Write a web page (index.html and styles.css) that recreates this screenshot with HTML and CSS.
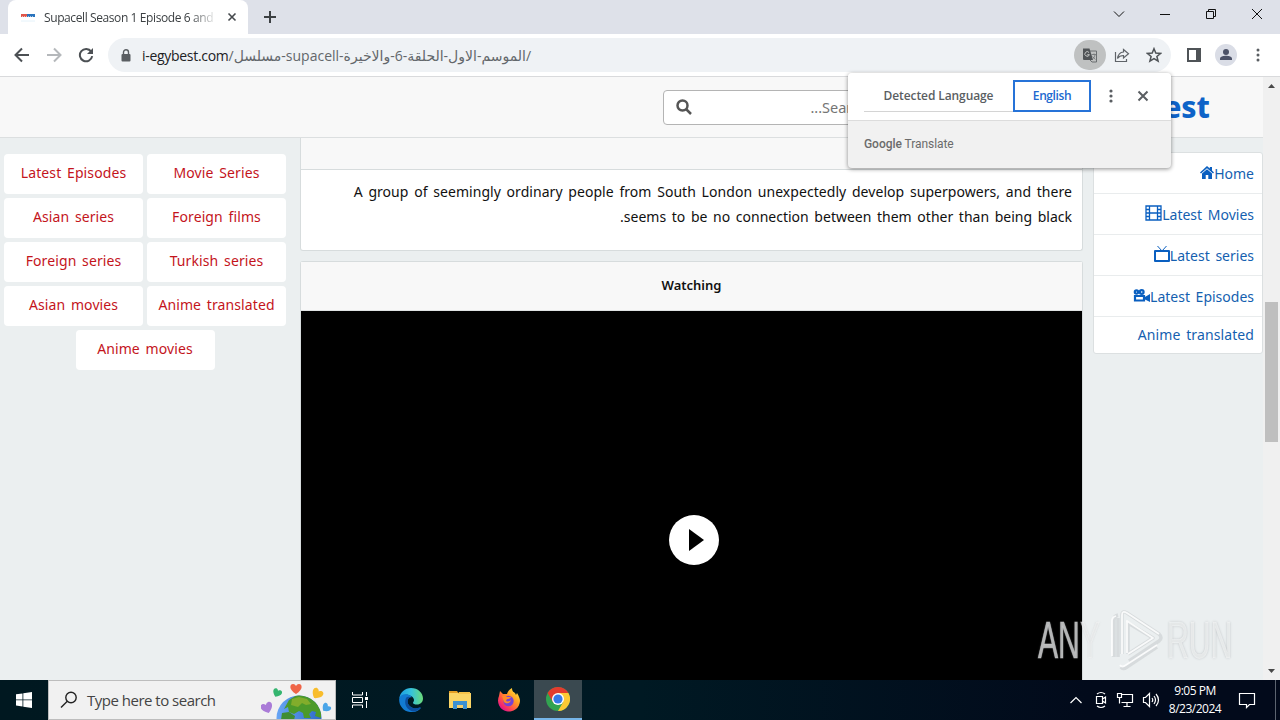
FILE: index.html
```
<!DOCTYPE html>
<html>
  <head>
    <meta charset="utf-8" />
    <title>Supacell Season 1 Episode 6 and</title>
    <link rel="stylesheet" href="styles.css" />
  </head>
  <body>
    <div class="tabs">
      <div class="tab">
        <svg class="favicon" width="16" height="16" viewBox="0 0 16 16">
          <rect width="16" height="16" fill="#fff" />
          <path d="M1 5h6v3H1z" fill="#e0564a" />
          <path d="M7 5h8v3H7z" fill="#2a74bd" />
          <path d="M2 7.500h12" stroke="#fff" stroke-width=".6" stroke-dasharray="1 1" />
          <path d="M1 12h14" stroke="#e4f2fa" />
        </svg>
        <span class="tab-title">Supacell Season 1 Episode 6 and</span>
        <svg width="10" height="10" viewBox="0 0 10 10"><path d="M1.500 1.500l7 7M8.500 1.500l-7 7" stroke="#45494d" stroke-width="1.600" /></svg>
      </div>
      <svg class="new-tab" width="14" height="14" viewBox="0 0 14 14"><path d="M7 1v12M1 7h12" stroke="#3c4043" stroke-width="2" /></svg>
      <div class="window-buttons">
        <svg width="12" height="12" viewBox="0 0 12 12"><path d="M1 3.500l5 5 5-5" /></svg>
        <svg width="12" height="12" viewBox="0 0 12 12"><path d="M1 6.500h10" /></svg>
        <svg width="12" height="12" viewBox="0 0 12 12"><path d="M1.500 3.500h7v7h-7zM3.500 3.500v-2h7v7h-2" /></svg>
        <svg width="12" height="12" viewBox="0 0 12 12"><path d="M1 1l10 10M11 1L1 11" /></svg>
      </div>
    </div>

    <div class="toolbar">
      <svg class="nav" width="16" height="16" viewBox="0 0 16 16"><path d="M15 8H2M8 1.500L1.500 8 8 14.500" stroke="#4c5054" /></svg>
      <svg class="nav" width="16" height="16" viewBox="0 0 16 16"><path d="M1 8h13M8 1.500L14.500 8 8 14.500" stroke="#b5b8bb" /></svg>
      <svg class="nav" width="16" height="16" viewBox="0 0 16 16"><path d="M13.200 4.600A6.200 6.200 0 1 0 14.200 9.200" stroke="#4c5054" /><path d="M15 1v6H9z" fill="#4c5054" stroke="none" /></svg>
      <div class="address">
        <svg width="10" height="13" viewBox="0 0 10 13"><rect y="5" x=".5" width="9" height="7.500" rx="1" fill="#5a5e62" /><path d="M2.500 5V3.300a2.500 2.500 0 0 1 5 0V5" fill="none" stroke="#5a5e62" stroke-width="1.400" /></svg>
        <div class="url"><span class="domain">i-egybest.com</span>/مسلسل-supacell-الموسم-الاول-الحلقة-6-والاخيرة/</div>
        <div class="translate-icon">
          <svg width="16" height="16" viewBox="0 0 16 16">
            <path d="M8 4h6.500v11H10l-2-2" fill="none" stroke="#6b6f71" />
            <path d="M1 1.500h6.500L11 13H2a1 1 0 0 1-1-1z" fill="#505457" />
            <path d="M7 5.500a2.300 2.300 0 1 0 .4 2.200H5.300" fill="none" stroke="#c5c7c6" />
            <path d="M9.500 7.500H14M12 6.500v1M10.600 9.500l2.700 3M13 8c-.4 2-1.500 3.300-2.300 3.800" fill="none" stroke="#6b6f71" stroke-width=".8" />
          </svg>
        </div>
        <svg class="share" width="16" height="16" viewBox="0 0 16 16"><path d="M1.500 5v9.500h11V12M9.500 2.500l5 4.300-5 4.200V8.500c-3 0-4.700 1-6 3 .5-3.600 2.500-6.200 6-6.500z" fill="none" stroke="#5f6368" stroke-width="1.200" /></svg>
        <svg width="16" height="16" viewBox="0 0 16 16"><path d="M8 1.700l1.800 4.400 4.800.3-3.700 3.100 1.200 4.700L8 11.600l-4.100 2.600 1.200-4.700L1.400 6.400l4.800-.3z" fill="none" stroke="#4f5357" stroke-width="1.500" /></svg>
      </div>
      <svg class="panel" width="14" height="14" viewBox="0 0 14 14"><path d="M1 1h12v12H1z" fill="#fff" stroke="#4f5357" stroke-width="2" /><path d="M9 1h4v12H9z" fill="#4f5357" /></svg>
      <svg class="profile" width="22" height="22" viewBox="0 0 22 22"><circle cx="11" cy="11" r="11" fill="#dadde6" /><circle cx="11" cy="8" r="3" fill="#4b5167" /><path d="M5 16v-1.300c0-2.200 3.500-3 6-3s6 .8 6 3V16z" fill="#4b5167" /></svg>
      <svg class="menu" width="4" height="14" viewBox="0 0 4 14" fill="#5a5e62"><circle cx="2" cy="2" r="1.500" /><circle cx="2" cy="7" r="1.500" /><circle cx="2" cy="12" r="1.500" /></svg>
    </div>

    <div class="viewport">
      <div class="page">
        <div class="header">
          <div class="search">
            <svg width="16" height="16" viewBox="0 0 16 16"><circle cx="6.500" cy="6.500" r="5" /><path d="M10 10l5 5" /></svg>
            <span>...Search</span>
          </div>
          <div class="logo"><span>Egy</span>Best</div>
        </div>
        <div class="columns">
          <div class="tags">
            <a>Latest Episodes</a>
            <a>Movie Series</a>
            <a>Asian series</a>
            <a>Foreign films</a>
            <a>Foreign series</a>
            <a>Turkish series</a>
            <a>Asian movies</a>
            <a>Anime translated</a>
            <a>Anime movies</a>
          </div>

          <div class="main">
            <div class="card story">
              <div class="story-head"></div>
              <p class="line1">A group of seemingly ordinary people from South London unexpectedly develop superpowers, and there</p>
              <p>.seems to be no connection between them other than being black</p>
            </div>
            <div class="card watch">
              <h3>Watching</h3>
              <div class="player">
                <svg width="50" height="50" viewBox="0 0 50 50"><circle cx="25" cy="25" r="25" fill="#fff" /><path d="M20 14l15 11-15 11z" /></svg>
              </div>
            </div>
          </div>

          <div class="side">
            <a>
              <svg width="14" height="13" viewBox="0 0 14 13"><path d="M7 0L0 6.500l1 1L7 2.300l6 5.200 1-1-2-1.900V1H9.800v1.600zM2 7.600V13h3.700V9h2.600v4H12V7.600L7 3.300z" fill="#0a5fc0" /></svg>
              <span>Home</span>
            </a>
            <a>
              <svg width="17" height="16" viewBox="0 0 17 16"><path d="M1 1h15v14H1zM4.500 1v14M12.500 1v14M4.500 8h8M1 4.500h3.500M1 8h3.500M1 11.500h3.500M12.500 4.500H16M12.500 8H16M12.500 11.500H16" fill="none" stroke="#0a5fc0" stroke-width="1.300" /></svg>
              <span>Latest Movies</span>
            </a>
            <a>
              <svg width="16" height="16" viewBox="0 0 16 16"><path d="M1 5h14v10H1z" fill="none" stroke="#0a5fc0" stroke-width="2" stroke-linejoin="round" /><path d="M3.500 0L8 5l4.500-5" fill="none" stroke="#0a5fc0" /></svg>
              <span>Latest series</span>
            </a>
            <a>
              <svg width="17" height="13" viewBox="0 0 17 13"><g fill="none" stroke="#0a5fc0" stroke-width="2.200"><circle cx="3.500" cy="3" r="1.700" /><circle cx="8.700" cy="3" r="1.900" /><path d="M2 7h9v4.500H2z" /></g><path d="M11 8.500L17 5v8l-6-3z" fill="#0a5fc0" /></svg>
              <span>Latest Episodes</span>
            </a>
            <a><span>Anime translated</span></a>
          </div>
        </div>
      </div>
      <div class="scrollbar">
        <svg width="7" height="4" viewBox="0 0 7 4"><path d="M0 4l3.500-4L7 4z" /></svg>
        <div class="thumb"></div>
        <svg width="7" height="4" viewBox="0 0 7 4"><path d="M0 0l3.500 4L7 0z" /></svg>
      </div>
    </div>

    <div class="popup">
      <div class="popup-top">
        <span class="detected">Detected Language</span>
        <span class="english">English</span>
        <svg width="4" height="14" viewBox="0 0 4 14" fill="#5a5e62"><circle cx="2" cy="2" r="1.600" /><circle cx="2" cy="7" r="1.600" /><circle cx="2" cy="12" r="1.600" /></svg>
        <svg class="close" width="12" height="12" viewBox="0 0 12 12"><path d="M1.500 1.500l9 9M10.500 1.500l-9 9" stroke="#5a5e62" stroke-width="2" /></svg>
      </div>
      <div class="popup-bottom"><b>Google</b> <span>Translate</span></div>
    </div>

    <div class="watermark">
      <span class="any">ANY</span>
      <svg width="56" height="64" viewBox="0 0 56 64" fill="none">
        <path d="M7 49V12q0-4 4-5M11 49V10M15 46V7q0-5 5-2l32 21q4 4 0 7L22 53M21 46V15l25 15-25 16M14 59q2 3 6 0l30-20" stroke="#c3c7c9" stroke-width="3.500" stroke-linejoin="round" opacity=".5" />
        <path d="M5 48V13q0-4 4-5M15 46V7q0-5 5-2l32 21M20 45V13l26 17-25 16M13 57q2 3 6 0l31-20" stroke="#fff" stroke-width="1.800" stroke-linejoin="round" opacity=".85" />
      </svg>
      <span class="run">RUN</span>
    </div>

    <div class="taskbar">
      <div class="start">
        <svg width="16" height="16" viewBox="0 0 16 16" fill="#fff"><path d="M0 2.300l6.500-.9v6.100H0zM7.300 1.300L16 0v7.500H7.300zM0 8.300h6.500v6.200L0 13.600zM7.300 8.300H16V16l-8.700-1.300z" /></svg>
      </div>
      <div class="task-search">
        <svg width="18" height="18" viewBox="0 0 18 18"><circle cx="11" cy="6.500" r="5.200" /><path d="M7.300 10.200L1 16.500" /></svg>
        <span>Type here to search</span>
        <svg class="earth" width="72" height="38" viewBox="0 0 72 38">
          <defs>
            <linearGradient id="sea" x2="1" y2="0"><stop offset="0" stop-color="#69a6f5" /><stop offset="1" stop-color="#2d69c9" /></linearGradient>
            <clipPath id="globe"><circle cx="38" cy="37" r="22.500" /></clipPath>
            <path id="heart" d="M0 5C-8 0-6-5-3-5c2 0 3 2 3 2s1-2 3-2c3 0 5 5-3 10z" />
          </defs>
          <circle cx="38" cy="37" r="22.500" fill="url(#sea)" />
          <g clip-path="url(#globe)">
            <path d="M28 19l8-5h10l9 5 5 9v9l-6-2 1-4-4-1-3 3 2 4h-7l-1-5-4-2-5 3-5-2-1-5-4 2z" fill="#4c9a2a" />
            <path d="M21 32l7-1 6 4-1 4H20z" fill="#3f8d32" />
            <path d="M31 18l7-2 8 2 4 5-5 1-4-2-4 4-7-2z" fill="#82ad2b" />
          </g>
          <use href="#heart" x="35" y="8" fill="#ef6548" />
          <use href="#heart" transform="translate(16 12) rotate(25) scale(.8)" fill="#35b56f" />
          <use href="#heart" transform="translate(56 13) rotate(35)" fill="#f8bd2c" />
          <use href="#heart" transform="translate(6 27) rotate(-20) scale(1.050)" fill="#aa7bd7" />
          <use href="#heart" transform="translate(65 27) rotate(45) scale(.8)" fill="#4aa5e8" />
        </svg>
      </div>
      <div class="app view">
        <svg width="18" height="18" viewBox="0 0 18 18" fill="none" stroke="#fff"><path d="M1.500 1v3h10V1M1.500 17v-3h10v3M1.500 6.500h10v5h-10zM15.500 1v4M15.500 10v7" /><path d="M14 6h3v3h-3z" fill="#fff" stroke="none" /></svg>
      </div>
      <div class="app edge">
        <svg width="24" height="24" viewBox="0 0 24 24">
          <defs>
            <linearGradient id="e1" x2="1" y2="0"><stop offset="0" stop-color="#1b9de2" /><stop offset=".5" stop-color="#35c1dc" /><stop offset="1" stop-color="#6bdc79" /></linearGradient>
          </defs>
          <path d="M.2 11C1 4 6 0 12 0c7 0 12 5 12 10.500 0 3.500-2.500 6-6 6-2.500 0-4-.8-4-1.600 0-.6 1-1 1-2.800C15 9 11 6.700 7.500 6.700 3.500 6.700 1 8.700.2 11z" fill="url(#e1)" />
          <path d="M.2 11C.8 7.500 4 5.800 7.500 6.300c2.500.3 4.500 1.600 5.500 3-3-.7-5 1.800-4.500 5 .7 4 6 8 12 5.500.9-.4 1.500 0 1 .7C18.500 23.500 15 24.400 11 24 4 23.200-.3 17 .2 11z" fill="#127bd2" />
          <path d="M7 10c-2.500 6 1 12 7 13.500 3 0 5.700-1.500 7.500-3.500.3-.7-.3-.8-1-.5-6 2.400-11-1-11.700-5-.2-2 .2-4.200 2.200-5.200C9.500 8.500 8 8.700 7 10z" fill="#0c4e9e" />
        </svg>
      </div>
      <div class="app">
        <svg width="22" height="20" viewBox="0 0 22 20"><path d="M0 1h8l2 3H0z" fill="#e59f24" /><path d="M0 3h22v15H0z" fill="#fbd566" /><path d="M10 2h11v2H9z" fill="#f6c34a" /><path d="M4 11h14v8h-4v-4H8v4H4z" fill="#3c91d3" /><path d="M8 15h6v3H8z" fill="#f4cf70" /></svg>
      </div>
      <div class="app">
        <svg width="24" height="24" viewBox="0 0 24 24">
          <defs>
            <linearGradient id="fox" x1=".9" y1=".1" x2=".2" y2=".9"><stop offset="0" stop-color="#ffe13c" /><stop offset=".4" stop-color="#ff9a24" /><stop offset=".75" stop-color="#ff4750" /><stop offset="1" stop-color="#e31587" /></linearGradient>
          </defs>
          <path d="M2 8l1-5 3 3h4c1-3 3-5 5-6 0 4 2 4 3 5l1 2 1-2c2 3 3 6 3 8A11 11 0 1 1 2 8z" fill="url(#fox)" />
          <circle cx="11.500" cy="13" r="5.200" fill="#7542d5" />
          <path d="M5 8c2-1 4 0 5 1h4c-1 2-3 2-4 2l-1 2c2 1 4 0 5-1-1 4-5 4-7 2-1-2-1-4-2-6z" fill="#ff8b27" />
        </svg>
      </div>
      <div class="app active">
        <svg width="24" height="24" viewBox="0 0 24 24"><circle cx="12" cy="12" r="12" fill="#32a350" /><path d="M1.600 6A12 12 0 0 1 22.400 6H12l-5.200 9z" fill="#e33b2e" /><path d="M22.400 6A12 12 0 0 1 12 24l5.200-9L12 6z" fill="#fcc934" /><circle cx="12" cy="12" r="6" fill="#fff" /><circle cx="12" cy="12" r="4.600" fill="#3779e8" /></svg>
      </div>
      <div class="tray">
        <svg width="14" height="16" viewBox="0 0 14 16"><path d="M1.500 11L7 5.500l5.500 5.500" /></svg>
        <svg width="14" height="18" viewBox="0 0 14 18"><path d="M2.500 5.500h6v7h-6zM8.500 8l3-2v6l-3-2M3 3q4-3 8 0M3 15q4 3 8 0" /></svg>
        <svg width="18" height="16" viewBox="0 0 18 16"><path d="M5.500 2.500h11v8h-11M11 10.500v4M7.500 14.500h7M1.500 1.500h4v4h-4zM3.500 5.500v6" /></svg>
        <svg width="18" height="16" viewBox="0 0 18 16"><path d="M1.500 5.500h2l4-4v13l-4-4h-2zM10 6q1.500 2 0 4M12 4q3 4 0 8M14 2q5 6 0 12" /></svg>
      </div>
      <div class="clock"><span>9:05 PM</span><span>8/23/2024</span></div>
      <svg class="notice" width="18" height="18" viewBox="0 0 18 18"><path d="M1.500 1.500h15v11h-5l-3 3v-3h-7z" /></svg>
      <div class="show-desktop"></div>
    </div>
  </body>
</html>
```
FILE: styles.css
```
* {
  box-sizing: border-box;
}

body {
  display: flex;
  flex-direction: column;
  width: 1280px;
  height: 720px;
  margin: 0;
  overflow: hidden;
  font-family: "Noto Sans", "Open Sans", sans-serif;
  white-space: nowrap;
}

svg {
  flex: none;
  display: block;
}

/* browser window */
.tabs {
  display: flex;
  height: 34px;
  padding-left: 8px;
  background: #dee1e9;
}

.tab {
  display: flex;
  align-items: center;
  width: 240px;
  padding: 0 11px 0 12px;
  background: #fff;
  border-radius: 8px 8px 0 0;
}

.tab-title {
  width: 170px;
  margin: 0 13px 0 8px;
  overflow: hidden;
  font: 12px "Open Sans", sans-serif;
  letter-spacing: -0.4px;
  color: #3c4043;
  -webkit-mask-image: linear-gradient(90deg, #000 86%, transparent 102%);
  mask-image: linear-gradient(90deg, #000 86%, transparent 102%);
}

.new-tab {
  margin: 10px 0 0 15px;
}

.window-buttons {
  display: flex;
  gap: 34px;
  margin: 8px 17px 0 auto;
}

.window-buttons path {
  fill: none;
  stroke: #111;
}

.toolbar {
  display: flex;
  align-items: center;
  height: 43px;
  padding-left: 14px;
  background: #fff;
  border-bottom: 1px solid #d9dadc;
}

.nav {
  margin-right: 16px;
  fill: none;
  stroke-width: 2;
}

.address {
  display: flex;
  align-items: center;
  width: 1063px;
  height: 34px;
  margin-left: -2px;
  padding: 0 9px 0 13px;
  background: #eff2f5;
  border-radius: 17px;
}

.url {
  margin: 0 auto 0 11px;
  font: 14px "Open Sans", "DejaVu Sans", sans-serif;
  color: #63676b;
}

.domain {
  letter-spacing: -0.3px;
  color: #202124;
}

.translate-icon {
  display: flex;
  align-items: center;
  justify-content: center;
  width: 32px;
  height: 30px;
  background: #bfc1c1;
  border-radius: 15px;
}

.share {
  margin: 0 16px 0 8px;
}

.panel {
  margin-left: 16px;
}

.profile {
  margin: 0 19px 0 14px;
}

/* site */
.viewport {
  display: flex;
  height: 603px;
}

.page {
  width: 1263px;
  background: #ebeff0;
}

.header {
  display: flex;
  align-items: center;
  justify-content: flex-end;
  height: 61px;
  padding-right: 53px;
  background: #f8f8f8;
  border-bottom: 1px solid #dcdfe0;
}

.search {
  display: flex;
  align-items: center;
  justify-content: space-between;
  width: 220px;
  height: 35px;
  margin-right: 211px;
  padding: 0 14px 0 12px;
  background: #fff;
  border: 1px solid #b4b4b4;
  border-radius: 4px;
  font-size: 14.5px;
  color: #757575;
}

.search svg {
  fill: none;
  stroke: #555;
  stroke-width: 2.5;
}

.logo {
  width: 116px;
  padding-bottom: 2px;
  direction: rtl;
  font: 800 30px "Noto Sans", sans-serif;
  color: #0d63c8;
}

.logo span {
  color: #e33a2e;
}

.columns {
  display: flex;
}

.tags {
  display: flex;
  flex-wrap: wrap;
  align-content: flex-start;
  justify-content: center;
  gap: 4px;
  width: 282px;
  margin: 16px 14px 0 4px;
}

.tags a {
  width: 139px;
  height: 40px;
  background: #fff;
  border-radius: 4px;
  font-size: 14px;
  line-height: 38px;
  text-align: center;
  letter-spacing: 0.1px;
  word-spacing: 2px;
  color: #c4141c;
}

.main {
  width: 783px;
}

.card {
  background: #fff;
  border: 1px solid #d7dcdd;
}

.story {
  height: 113px;
  margin-bottom: 10px;
  border-top: 0;
  border-radius: 0 0 3px 3px;
}

.story-head {
  height: 32px;
  margin-bottom: 9px;
  background: #f8f8f8;
  border-bottom: 1px solid #d7dcdd;
}

.story p {
  margin: 0 10px 0 0;
  font-size: 14px;
  line-height: 25px;
  text-align: right;
  word-spacing: 2px;
  color: #111;
}

.story .line1 {
  letter-spacing: 0.05px;
}

.watch {
  height: 419px;
  border-bottom: 0;
  border-radius: 3px 3px 0 0;
}

.watch h3 {
  height: 49px;
  margin: 0;
  background: #f8f8f8;
  border-bottom: 1px solid #e0e3e4;
  font-size: 13px;
  font-weight: 600;
  line-height: 47px;
  text-align: center;
  color: #111;
}

.player {
  display: flex;
  justify-content: center;
  height: 369px;
  padding: 204px 0 0 5px;
  background: #000;
}

.side {
  width: 170px;
  height: 202px;
  margin: 14px 0 0 10px;
  background: #fff;
  border: 1px solid #dce0e1;
  border-radius: 3px;
}

.side a {
  display: flex;
  align-items: center;
  justify-content: flex-end;
  height: 41px;
  padding-right: 8px;
  border-bottom: 1px solid #e9eced;
  font-size: 14px;
  word-spacing: 2px;
  color: #155fb0;
}

.side svg {
  margin-bottom: 2px;
}

.side a:last-child {
  height: 34px;
  border: 0;
  letter-spacing: 0.1px;
}

.scrollbar {
  display: flex;
  flex-direction: column;
  align-items: center;
  width: 17px;
  padding: 7px 0;
  background: #f0f0f0;
}

.scrollbar path {
  fill: #484848;
}

.thumb {
  width: 13px;
  height: 140px;
  margin: 214px 0 auto;
  background: #bfbfbf;
}

/* translate bubble, over the page */
.popup {
  position: absolute;
  left: 848px;
  top: 73px;
  width: 323px;
  height: 95px;
  overflow: hidden;
  background: #f1f1f1;
  border-radius: 4px;
  box-shadow: 0 1px 4px rgba(0, 0, 0, 0.45);
}

.popup-top {
  display: flex;
  align-items: center;
  height: 48px;
  padding: 0 0 1px 16px;
  background: #fff;
  border-bottom: 1px solid #dcdcdc;
  font: 600 12px "Open Sans", sans-serif;
}

.detected {
  width: 149px;
  height: 32px;
  border-bottom: 1px solid #d4d4d4;
  line-height: 32px;
  text-align: center;
  letter-spacing: -0.1px;
  color: #5a5e62;
}

.english {
  width: 78px;
  height: 32px;
  margin-right: 18px;
  border: 2px solid #2673d8;
  line-height: 28px;
  text-align: center;
  letter-spacing: -0.4px;
  color: #2068cf;
}

.close {
  margin-left: 24px;
}

.popup-bottom {
  padding-left: 16px;
  font: 12px/47px Roboto, sans-serif;
  letter-spacing: -0.05px;
  color: #6b6b6b;
}

.popup-bottom b {
  font-weight: 500;
}

.watermark {
  position: absolute;
  left: 1038px;
  top: 608px;
  display: flex;
  align-items: center;
  width: 196px;
  height: 64px;
}

.watermark span {
  font: 52px "Liberation Sans", sans-serif;
  transform: scaleX(0.58);
  transform-origin: left;
  -webkit-text-stroke: 1px rgba(255, 255, 255, 0.3);
}

.watermark .any {
  width: 69px;
  color: rgba(255, 255, 255, 0.55);
  text-shadow: 0 0 2px rgba(170, 175, 178, 0.6);
}

.watermark .run {
  margin-left: 4px;
  color: rgba(240, 242, 243, 0.8);
  text-shadow: 0 0 3px #b0b5b8;
}

/* windows taskbar */
.taskbar {
  display: flex;
  height: 40px;
  background: linear-gradient(90deg, #001820, #001923 50%, #020a1b 85%);
}

.start {
  display: flex;
  align-items: center;
  justify-content: center;
  width: 48px;
}

.task-search {
  display: flex;
  align-items: center;
  width: 288px;
  padding: 0 2px 0 11px;
  background: #f1f1f1;
  border: 1px solid #bdbdbd;
  font: 15px "Open Sans", sans-serif;
  color: #444;
}

.task-search > svg:first-child {
  fill: none;
  stroke: #222;
  stroke-width: 1.4;
}

.task-search span {
  margin-left: 9px;
  letter-spacing: -0.5px;
}

.earth {
  margin-left: auto;
}

.app {
  display: flex;
  align-items: center;
  justify-content: center;
  width: 49px;
}

.view {
  width: 48px;
}

.edge {
  width: 53px;
}

.edge + .app {
  width: 46px;
}

.edge + .app + .app {
  width: 51px;
}

.active {
  width: 48px;
  background: #3a4950;
  border-bottom: 2px solid #76b5e8;
}

.tray {
  display: flex;
  align-items: center;
  gap: 8px;
  margin-left: auto;
}

.tray svg:nth-child(2) {
  margin: 0 0 0 3px;
}

.tray path,
.notice path {
  fill: none;
  stroke: #fff;
  stroke-width: 1.2;
}

.clock {
  width: 70px;
  padding-top: 2px;
  font: 12px/18px "Open Sans", sans-serif;
  text-align: center;
  letter-spacing: -0.5px;
  color: #fff;
}

.clock span {
  display: block;
}

.notice {
  margin: 12px 19px 0 8px;
}

.show-desktop {
  width: 5px;
  border-left: 1px solid #5c6470;
}
```
